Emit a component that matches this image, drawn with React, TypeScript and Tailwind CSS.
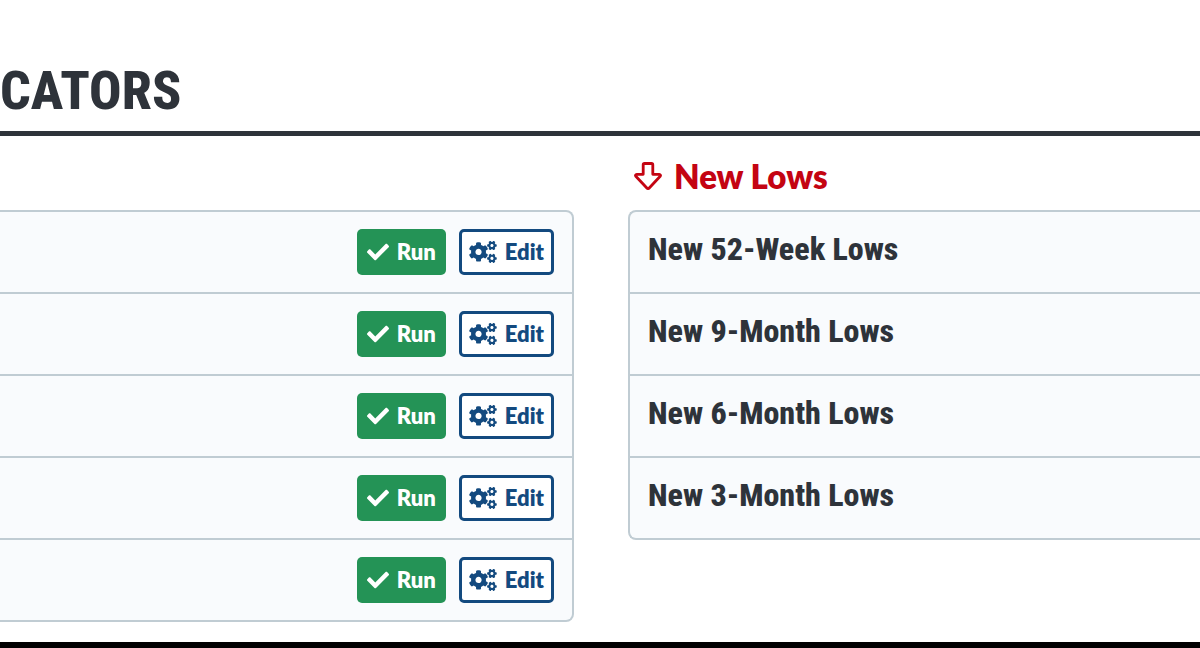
import { FaCheck, FaCogs } from "react-icons/fa";

const highs = ["New 52-Week Highs", "New 9-Month Highs", "New 6-Month Highs", "New 3-Month Highs", "New 1-Month Highs"];
const lows = ["New 52-Week Lows", "New 9-Month Lows", "New 6-Month Lows", "New 3-Month Lows"];

function DownArrow() {
  return (
    <svg viewBox="0 0 28 28" className="w-7 h-7" fill="none" stroke="currentColor" strokeWidth="2.8" strokeLinejoin="round" aria-hidden="true">
      <path d="M9.2 2.8a1.3 1.3 0 0 1 1.3-1.3h7a1.3 1.3 0 0 1 1.3 1.3v9.5h6.5a1.2 1.2 0 0 1 .9 2L15 26.2a1.3 1.3 0 0 1-1.9 0L1.8 14.3a1.2 1.2 0 0 1 .9-2h6.5z" />
    </svg>
  );
}

function RowButtons({ name }: { name: string }) {
  return (
    <div className="flex items-center gap-[13px] font-['Lato',sans-serif] text-[22px] leading-7 font-extrabold">
      <button type="button" aria-label={`Run ${name}`} className="flex items-center gap-2 h-[46px] px-[10px] rounded-[5px] bg-[#249356] text-white cursor-pointer">
        <FaCheck />
        Run
      </button>
      <button type="button" aria-label={`Edit ${name}`} className="flex items-center gap-2 h-[46px] px-[7px] rounded-[5px] border-3 border-[#134a7f] bg-white text-[#134a7f] cursor-pointer">
        <FaCogs className="w-7" />
        Edit
      </button>
    </div>
  );
}

export default function App() {
  return (
    <div className="bg-white text-[#2e333a]">
      <h1 className="pt-[59px] pb-2 border-b-5 border-[#2e333a] font-['Roboto_Condensed','Roboto',sans-serif] text-[54px] leading-[64px] font-extrabold">
        CATORS
      </h1>
      <main className="grid grid-cols-2 pt-5 pb-5">
        <section className="pr-[26px] pt-[54px]">
          <ul className="border-2 border-l-0 border-[#c0ccd3] rounded-r-lg bg-[#f9fbfd] divide-y-2 divide-[#c0ccd3]">
            {highs.map((name) => (
              <li key={name} className="flex items-center justify-end box-content h-20 pr-[18px]">
                <RowButtons name={name} />
              </li>
            ))}
          </ul>
        </section>
        <section className="pl-7">
          <h2 className="flex items-center gap-3 h-10 mb-[14px] pl-[6px] font-['Lato',sans-serif] text-[33px] leading-10 font-extrabold text-[#c40412]">
            <DownArrow />
            New Lows
          </h2>
          <ul className="border-2 border-r-0 border-[#c0ccd3] rounded-l-lg bg-[#f9fbfd] divide-y-2 divide-[#c0ccd3]">
            {lows.map((name) => (
              <li key={name} className="flex items-center box-content h-[74px] pb-[6px] pl-[18px] font-['Roboto_Condensed','Roboto',sans-serif] text-[32px] leading-10 font-extrabold">
                {name}
              </li>
            ))}
          </ul>
        </section>
      </main>
      <footer className="h-[6px] bg-black" />
    </div>
  );
}
